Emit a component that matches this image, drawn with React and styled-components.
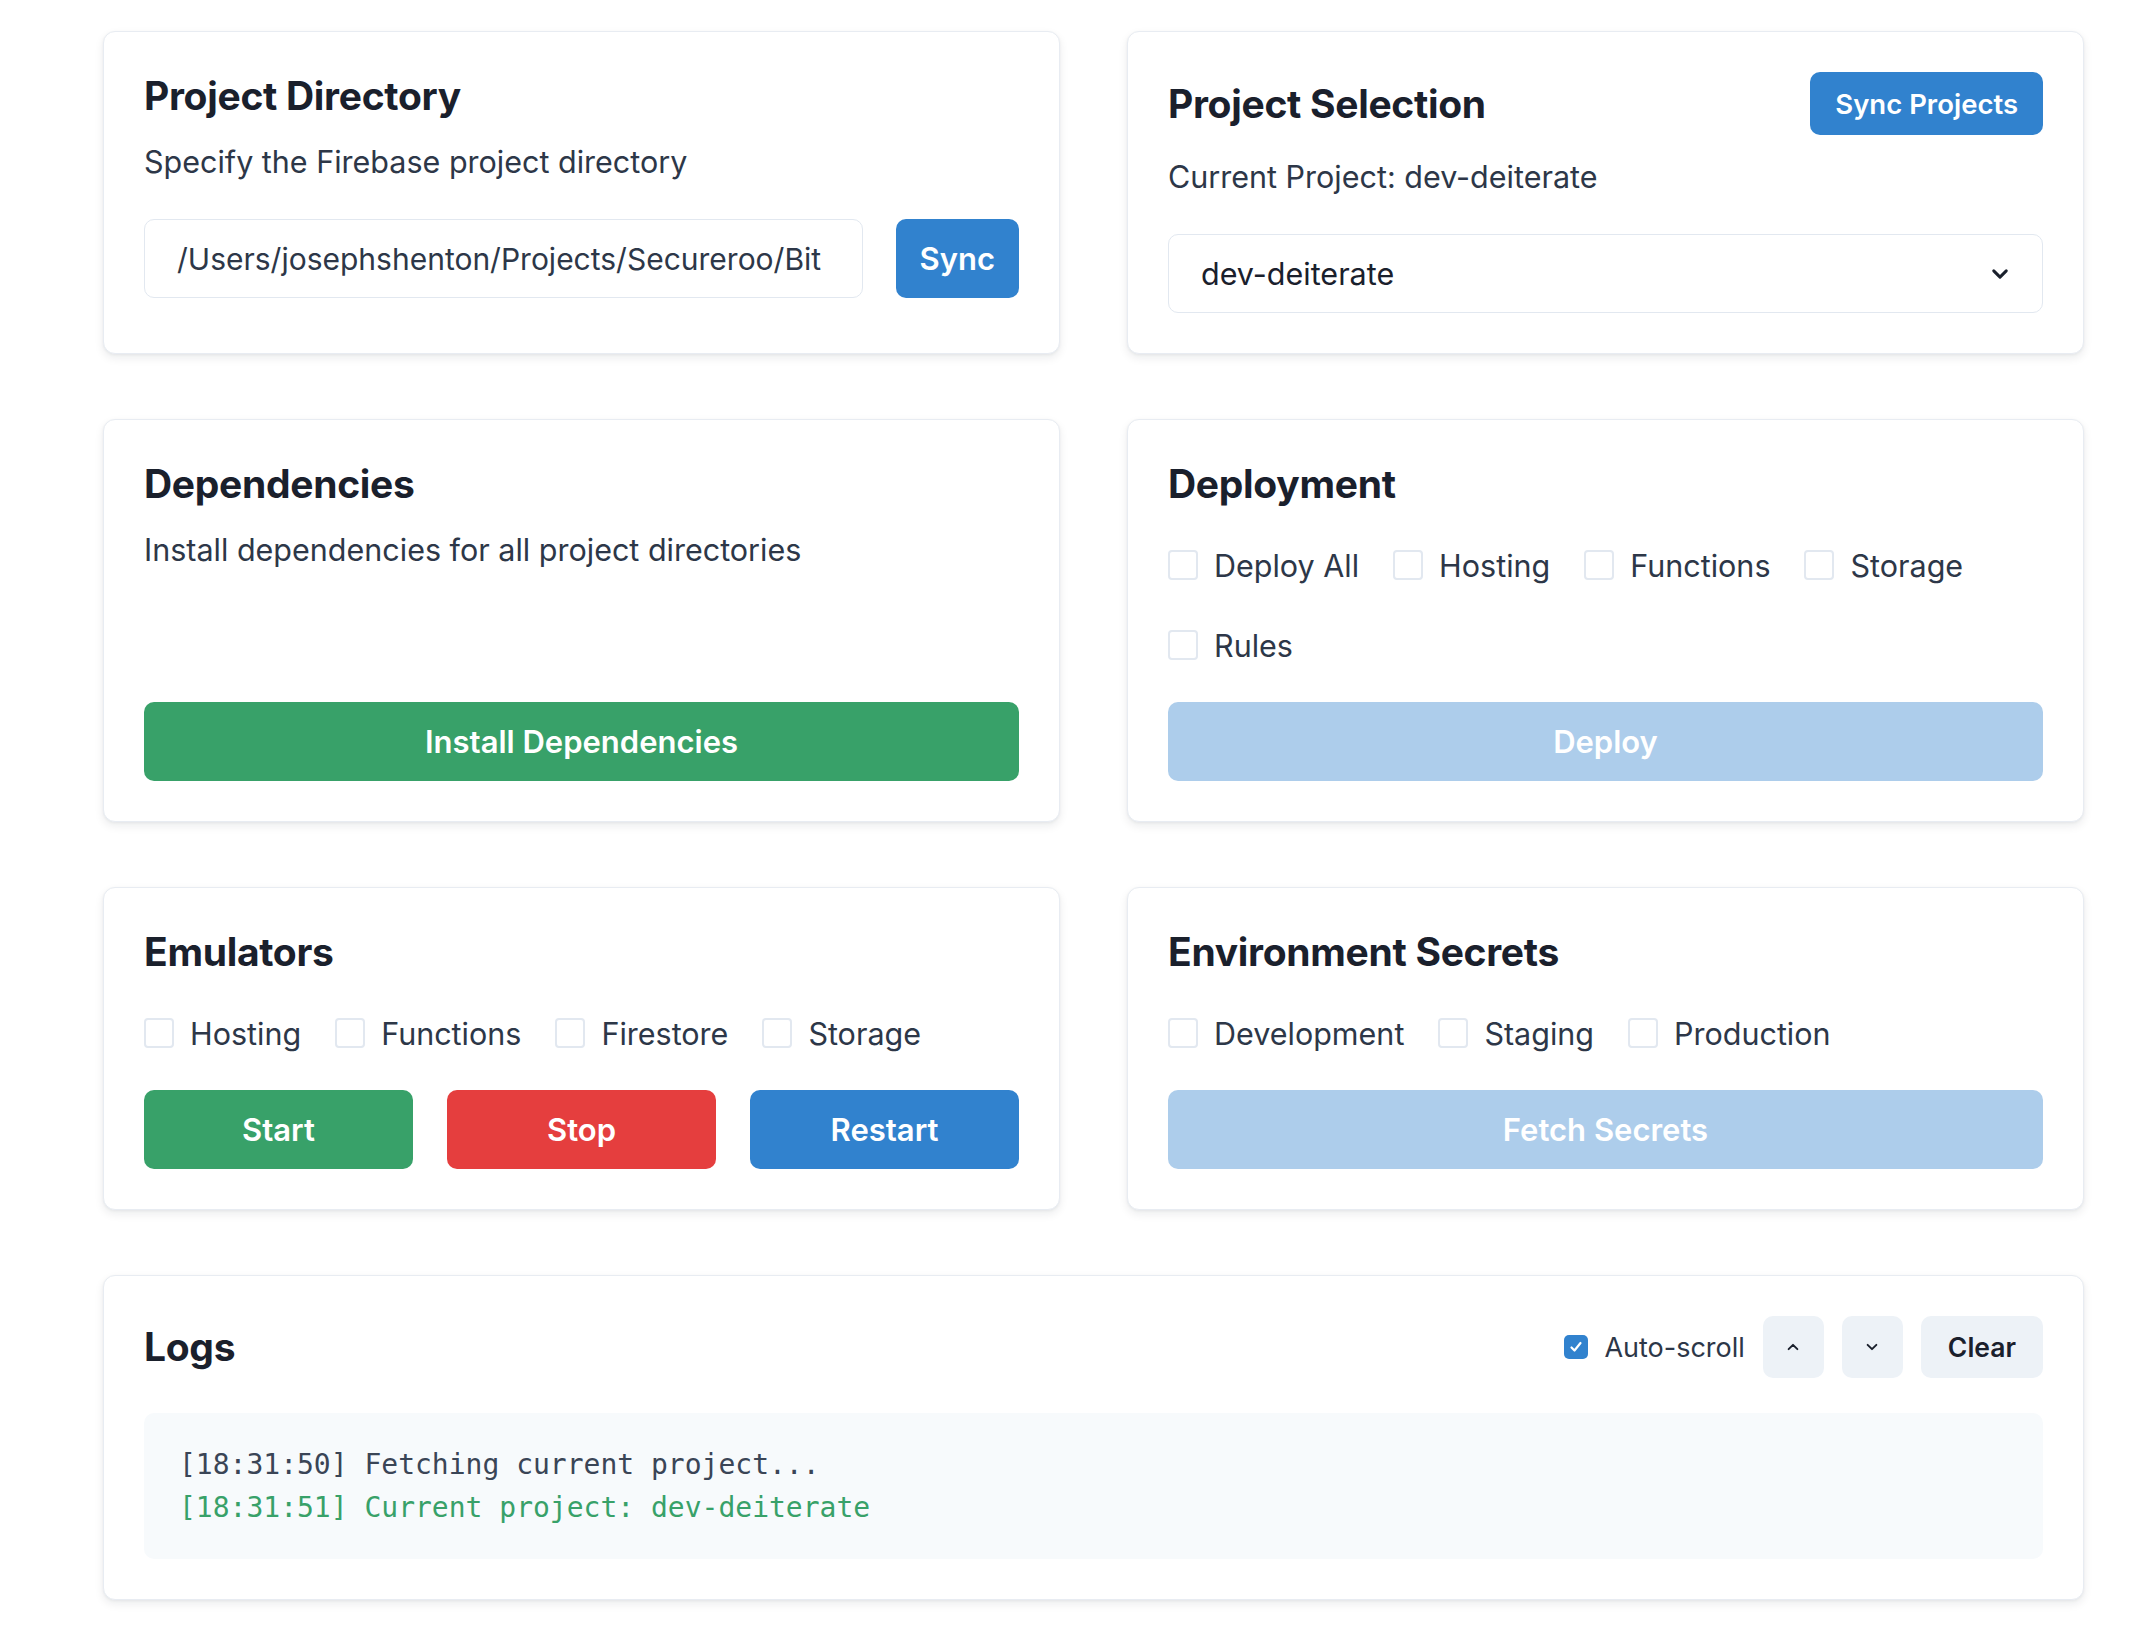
import React from 'react';
import styled, { createGlobalStyle } from 'styled-components';

const GlobalStyle = createGlobalStyle`
	body {
		margin: 0;
		background: #ffffff;
		font-family: Inter, "Noto Sans", sans-serif;
		color: #1a202c;
	}
`;

const Page = styled.div`
	display: grid;
	grid-template-columns: 957px 957px;
	column-gap: 67px;
	row-gap: 65px;
	padding: 31px 0 45px 103px;
`;

const Card = styled.section`
	grid-column: ${p => (p.$wide ? '1 / -1' : 'auto')};
	display: flex;
	flex-direction: column;
	gap: 35px;
	padding: 40px;
	background: #ffffff;
	border: 1px solid #e8ecf2;
	border-radius: 12px;
	box-shadow: 0 4px 10px rgba(15, 23, 42, 0.08), 0 1px 3px rgba(15, 23, 42, 0.05);
`;

const Intro = styled.div`
	display: flex;
	flex-direction: column;
	gap: 20px;
`;

const Title = styled.h2`
	margin: 0;
	font-size: 39px;
	line-height: 48px;
	font-weight: 700;
	color: #1a202c;
	letter-spacing: -0.3px;
`;

const Text = styled.p`
	margin: 0;
	font-size: 30.5px;
	line-height: 44px;
	color: #2d3748;
`;

const HeaderRow = styled.div`
	display: flex;
	align-items: center;
	justify-content: space-between;
	min-height: 62px;
`;

const Button = styled.button`
	height: ${p => (p.$small ? '63px' : '79px')};
	padding: 0 ${p => (p.$small ? '25px' : '24px')};
	border: none;
	border-radius: 10px;
	font-family: inherit;
	font-size: ${p => (p.$small ? '27.5px' : '31px')};
	font-weight: 600;
	color: #ffffff;
	cursor: pointer;
	background: ${p =>
		p.$muted ? '#adcdeb' : p.$tone === 'green' ? '#38a169' : p.$tone === 'red' ? '#e53e3e' : '#3182ce'};
	margin-top: ${p => (p.$push ? 'auto' : '0')};
	flex-shrink: 0;
`;

const InputRow = styled.div`
	display: flex;
	gap: 33px;
`;

const Input = styled.input`
	flex: 1;
	min-width: 0;
	height: 79px;
	box-sizing: border-box;
	padding: 0 16px 0 32px;
	border: 1px solid #e2e8f0;
	border-radius: 10px;
	font-family: inherit;
	font-size: 30px;
	color: #2d3748;
	background: #ffffff;
	outline: none;
`;

const SelectBox = styled.div`
	display: flex;
	align-items: center;
	justify-content: space-between;
	height: 79px;
	box-sizing: border-box;
	padding: 0 32px;
	border: 1px solid #e2e8f0;
	border-radius: 10px;
	font-size: 30.5px;
	color: #1a202c;
`;

const Checks = styled.div`
	display: flex;
	flex-wrap: wrap;
	column-gap: 34px;
	row-gap: 36px;
`;

const CheckItem = styled.label`
	display: inline-flex;
	align-items: center;
	gap: 16px;
	height: 44px;
	font-size: 30.5px;
	color: #2d3748;
`;

const Box = styled.span`
	width: 30px;
	height: 30px;
	box-sizing: border-box;
	border: 2px solid #e2e8f0;
	border-radius: 4px;
	background: #ffffff;
`;

const ButtonGrid = styled.div`
	display: grid;
	grid-template-columns: repeat(3, 1fr);
	gap: 34px;
`;

const Controls = styled.div`
	display: flex;
	align-items: center;
	gap: 18px;
`;

const AutoScroll = styled.label`
	display: inline-flex;
	align-items: center;
	gap: 16px;
	font-size: 27px;
	color: #2d3748;
`;

const Ticked = styled.span`
	display: inline-flex;
	align-items: center;
	justify-content: center;
	width: 24px;
	height: 24px;
	border-radius: 5px;
	background: #3182ce;
`;

const GhostButton = styled.button`
	display: inline-flex;
	align-items: center;
	justify-content: center;
	height: 62px;
	width: ${p => (p.$wide ? 'auto' : '61px')};
	padding: 0 ${p => (p.$wide ? '27px' : '0')};
	border: none;
	border-radius: 10px;
	background: #edf2f7;
	font-family: inherit;
	font-size: 26.5px;
	font-weight: 600;
	color: #1a202c;
`;

const LogBox = styled.div`
	padding: 30px 35px;
	border-radius: 10px;
	background: #f7fafc;
	font-family: "DejaVu Sans Mono", "Liberation Mono", monospace;
	font-size: 28px;
	line-height: 43px;
`;

const LogLine = styled.div`
	color: ${p => (p.$ok ? '#38a169' : '#3a4556')};
	white-space: pre;
`;

const Chevron = ({ up, size = 16, weight = 2.2 }) => (
	<svg width={size} height={size} viewBox="0 0 16 16" fill="none">
		<polyline
			points={up ? '3,10.5 8,5.5 13,10.5' : '3,5.5 8,10.5 13,5.5'}
			stroke="#1a202c"
			strokeWidth={weight}
			strokeLinecap="round"
			strokeLinejoin="round"
		/>
	</svg>
);

const Check = ({ label }) => (
	<CheckItem>
		<Box />
		{label}
	</CheckItem>
);

const App = () => {
	return (
		<>
			<GlobalStyle />
			<Page>
				<Card>
					<Intro>
						<Title>Project Directory</Title>
						<Text>Specify the Firebase project directory</Text>
					</Intro>
					<InputRow>
						<Input readOnly value="/Users/josephshenton/Projects/Secureroo/Bit" />
						<Button>Sync</Button>
					</InputRow>
				</Card>

				<Card>
					<Intro>
						<HeaderRow>
							<Title>Project Selection</Title>
							<Button $small>Sync Projects</Button>
						</HeaderRow>
						<Text>Current Project: dev-deiterate</Text>
					</Intro>
					<SelectBox>
						<span>dev-deiterate</span>
						<Chevron size={20} weight={2.4} />
					</SelectBox>
				</Card>

				<Card>
					<Intro>
						<Title>Dependencies</Title>
						<Text>Install dependencies for all project directories</Text>
					</Intro>
					<Button $tone="green" $push>Install Dependencies</Button>
				</Card>

				<Card>
					<Title>Deployment</Title>
					<Checks>
						{['Deploy All', 'Hosting', 'Functions', 'Storage', 'Rules'].map(l => (
							<Check key={l} label={l} />
						))}
					</Checks>
					<Button $muted>Deploy</Button>
				</Card>

				<Card>
					<Title>Emulators</Title>
					<Checks>
						{['Hosting', 'Functions', 'Firestore', 'Storage'].map(l => (
							<Check key={l} label={l} />
						))}
					</Checks>
					<ButtonGrid>
						<Button $tone="green">Start</Button>
						<Button $tone="red">Stop</Button>
						<Button>Restart</Button>
					</ButtonGrid>
				</Card>

				<Card>
					<Title>Environment Secrets</Title>
					<Checks>
						{['Development', 'Staging', 'Production'].map(l => (
							<Check key={l} label={l} />
						))}
					</Checks>
					<Button $muted>Fetch Secrets</Button>
				</Card>

				<Card $wide>
					<HeaderRow>
						<Title>Logs</Title>
						<Controls>
							<AutoScroll>
								<Ticked>
									<svg width="16" height="16" viewBox="0 0 16 16" fill="none">
										<polyline points="3.5,8.5 6.5,11.5 12.5,4" stroke="#fff" strokeWidth="2.2" strokeLinecap="round" strokeLinejoin="round" />
									</svg>
								</Ticked>
								Auto-scroll
							</AutoScroll>
							<GhostButton><Chevron up size={14} /></GhostButton>
							<GhostButton><Chevron size={14} /></GhostButton>
							<GhostButton $wide>Clear</GhostButton>
						</Controls>
					</HeaderRow>
					<LogBox>
						<LogLine>[18:31:50] Fetching current project...</LogLine>
						<LogLine $ok>[18:31:51] Current project: dev-deiterate</LogLine>
					</LogBox>
				</Card>
			</Page>
		</>
	);
};

export default App;
